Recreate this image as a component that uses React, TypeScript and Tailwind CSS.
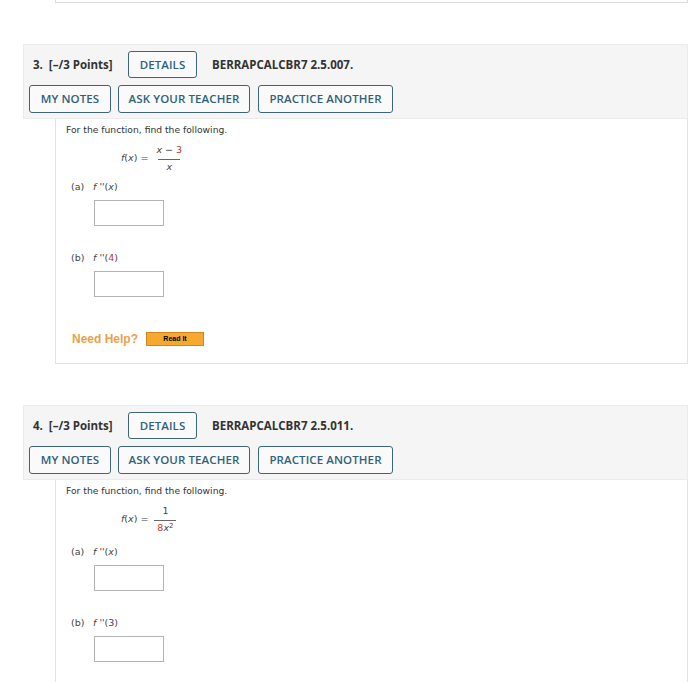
import React from 'react';

const btn =
  "h-full flex items-center justify-center border-[1.5px] border-[#3d6577] rounded-[3px] bg-[#fafafa] text-[#2f617a] text-[11.5px] font-semibold tracking-[0.1px]";

const Header: React.FC<{ num: number; code: string }> = ({ num, code }) => (
  <div className="h-[75px] bg-[#f5f5f5] border border-[#ebebeb] pt-[6px]">
    <div className="h-[27px] flex items-center" style={{ fontFamily: "'Open Sans', sans-serif" }}>
      <span className="ml-[9px] w-[95px] text-[11.5px] font-bold text-[#333]">
        {num}.&nbsp; [–/3 Points]
      </span>
      <div className={`${btn} w-[69px]`}>DETAILS</div>
      <span className="ml-[15px] text-[11.5px] font-bold text-[#333]">{code}</span>
    </div>
    <div className="h-[28px] mt-[7px] ml-[5px] flex gap-[7px]" style={{ fontFamily: "'Open Sans', sans-serif" }}>
      <div className={`${btn} w-[82px]`}>MY NOTES</div>
      <div className={`${btn} w-[132px]`}>ASK YOUR TEACHER</div>
      <div className={`${btn} w-[135px] ml-[1px]`}>PRACTICE ANOTHER</div>
    </div>
  </div>
);

const Part: React.FC<{ label: string; arg: React.ReactNode }> = ({ label, arg }) => (
  <>
    <div className="h-[14px] flex items-center pl-[15px] text-[9.5px] text-[#444]">
      <span className="w-[22px]">({label})</span>
      <span>
        <i>f</i> ''({arg})
      </span>
    </div>
    <div className="ml-[38px] mt-[6px] w-[70px] h-[26px] border border-[#b3b3b3] bg-white" />
  </>
);

const Question: React.FC<{
  num: number;
  code: string;
  numer: React.ReactNode;
  denom: React.ReactNode;
  arg: React.ReactNode;
  help?: boolean;
  last?: boolean;
}> = ({ num, code, numer, denom, arg, help, last }) => (
  <div>
    <Header num={num} code={code} />
    <div
      className={`ml-[32px] bg-white border-x border-[#e3e3e3] ${last ? "h-[300px]" : "h-[245px] border-b"}`}
      style={{ fontFamily: "'DejaVu Sans', Verdana, sans-serif" }}
    >
      <div className="pt-[4px] pl-[10px] h-[18px] flex items-center text-[9.2px] text-[#333]">
        For the function, find the following.
      </div>
      <div className="h-[36px] pt-[6px] pl-[65px] flex items-center text-[9.5px] text-[#444]">
        <span>
          <i>f</i>(<i>x</i>) =&nbsp;
        </span>
        <div className="ml-[3px] flex flex-col items-center">
          <div className="h-[13px] flex items-end px-[2px]">{numer}</div>
          <div className="w-[22px] border-t border-[#666] mt-[2px]" />
          <div className="h-[12px] flex items-start">{denom}</div>
        </div>
      </div>
      <div className={last ? "h-[11px]" : "h-[7px]"} />
      <Part label="a" arg={<i>x</i>} />
      <div className="h-[25px]" />
      <Part label="b" arg={arg} />
      {help && (
        <div className="mt-[33px] pl-[16px] flex items-center" style={{ fontFamily: "'Liberation Sans', Arial, sans-serif" }}>
          <span className="text-[12px] font-bold text-[#e9a14c]">Need Help?</span>
          <div className="ml-[8px] w-[58px] h-[14px] flex items-center justify-center bg-[#f6a92e] border border-[#cf8524] text-[7px] font-bold text-black">
            Read It
          </div>
        </div>
      )}
    </div>
  </div>
);

const App: React.FC = () => {
  return (
    <div className="w-[700px] h-[682px] overflow-hidden bg-white pl-[23px] pr-[12px]">
      <div className="ml-[32px] h-[3px] border-x border-b border-[#dcdcdc]" />
      <div className="h-[41px]" />
      <Question
        num={3}
        code="BERRAPCALCBR7 2.5.007."
        numer={
          <span>
            <i>x</i> − <span className="text-[#c0392b]">3</span>
          </span>
        }
        denom={<i>x</i>}
        arg={<span className="text-[#c0392b]">4</span>}
        help
      />
      <div className="h-[41px]" />
      <Question
        num={4}
        code="BERRAPCALCBR7 2.5.011."
        numer={<span>1</span>}
        denom={
          <span>
            <span className="text-[#c0392b]">8</span>
            <i>x</i>
            <sup className="text-[7px]">2</sup>
          </span>
        }
        arg={<span>3</span>}
        last
      />
    </div>
  );
};

export default App;
